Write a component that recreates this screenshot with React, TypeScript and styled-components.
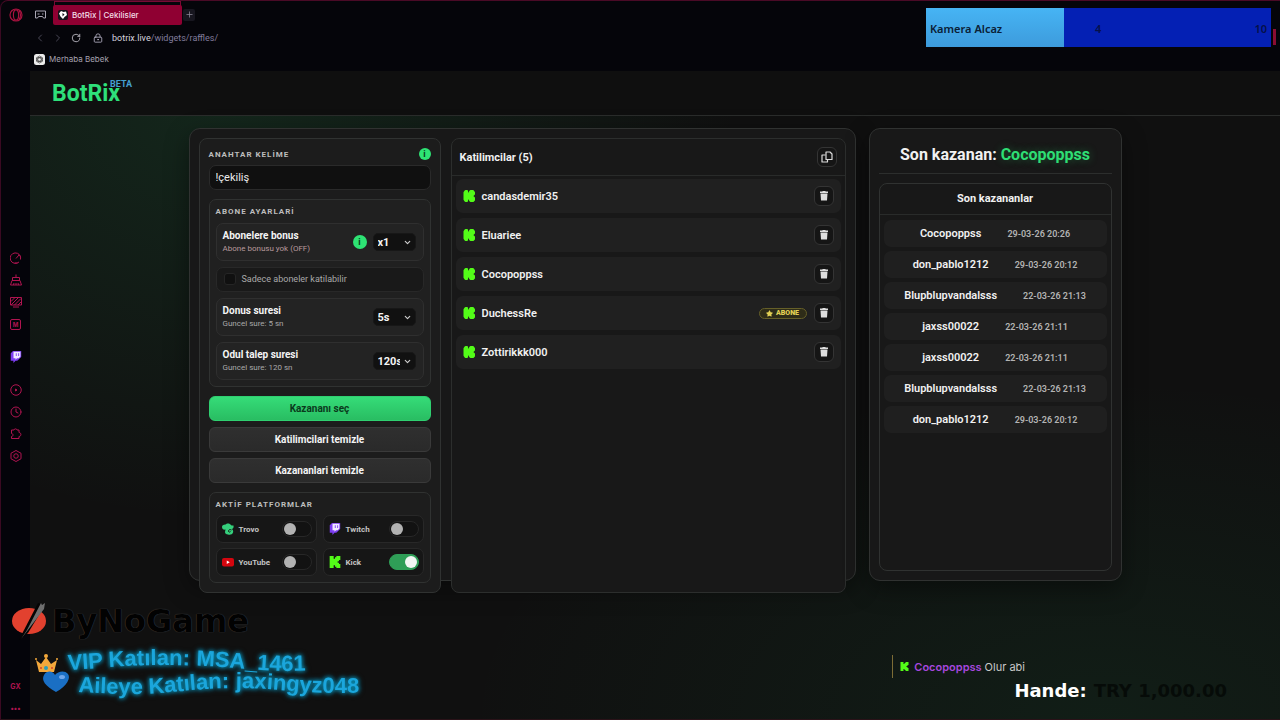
import React from "react";
import styled, { createGlobalStyle, css } from "styled-components";
import { Clock, ChevronLeft, ChevronRight, ChevronDown, RotateCw, LockKeyhole, Plus } from "lucide-react";
import { FaStar } from "react-icons/fa";

const GlobalStyle = createGlobalStyle`
  *, *::before, *::after { box-sizing: border-box; }
  body { margin: 0; background: #05050a; font-family: Roboto, "Liberation Sans", sans-serif; color: #f1f1f1; }
  button, input, select { font-family: inherit; margin: 0; }
  svg { display: block; flex: none; }
  h1, h2, h3, p, ul { margin: 0; padding: 0; list-style: none; }
`;

/* ---------- browser window ---------- */

const Window = styled.div`
  position: relative;
  display: flex;
  flex-direction: column;
  min-height: 100vh;
  overflow: hidden;
  background: #05050a;
  border-top: 1px solid #4a0a26;
  border-left: 1px solid #3a0a22;
  border-bottom: 1px solid #2a1218;
  border-top-left-radius: 8px;
`;

const TabBar = styled.div`
  display: flex;
  align-items: center;
  height: 27px;
  padding-left: 8px;
  font-family: Inter, sans-serif;
`;

const BrowserIcon = styled.button<{ $size?: number }>`
  display: flex;
  align-items: center;
  justify-content: center;
  width: ${(p) => p.$size ?? 12}px;
  height: ${(p) => p.$size ?? 12}px;
  padding: 0;
  border: 0;
  background: none;
  color: #8d8a99;
`;

const GameIcon = styled(BrowserIcon)`
  margin: 0 7px 0 11px;
`;

const Tab = styled.div`
  display: flex;
  align-items: center;
  gap: 4px;
  width: 129px;
  height: 20px;
  padding-left: 5px;
  border-radius: 2px;
  background: #8f0032;
  box-shadow: 0 -5px 0 -2px #05050a, 0 -6px 0 -1px #7a0a34;
  color: #f3dfe7;
  font-size: 8px;
  font-weight: 500;
`;

const NewTab = styled(BrowserIcon)`
  margin-left: 1px;
  border-radius: 2px;
  background: #17161f;
`;

const AddressBar = styled.div`
  display: flex;
  align-items: center;
  height: 19px;
  padding-left: 33px;
  gap: 6px;
`;

const Address = styled.span`
  display: flex;
  align-items: center;
  gap: 9px;
  margin-left: 5px;
  color: #b5b1c4;
`;

const AddressText = styled.span`
  font-size: 9px;
  color: #d5d2de;
`;

const AddressPath = styled.span`
  color: #817c9c;
`;

const Bookmarks = styled.nav`
  display: flex;
  align-items: center;
  height: 24px;
  padding-left: 33px;
  font-family: Inter, sans-serif;
`;

const Bookmark = styled.a`
  display: flex;
  align-items: center;
  gap: 4px;
  color: #a5a2af;
  font-size: 8px;
  text-decoration: none;
`;

const Body = styled.div`
  display: flex;
  flex: 1;
`;

const Sidebar = styled.nav`
  display: flex;
  flex-direction: column;
  align-items: center;
  gap: 21px;
  width: 29px;
  padding: 181px 0 4px;
  background: #04040a;
`;

const SideGroup = styled.div`
  display: flex;
  flex-direction: column;
  gap: 10px;
`;

const SideBottom = styled(SideGroup)`
  margin-top: auto;
`;

const SideButton = styled.button`
  display: flex;
  align-items: center;
  justify-content: center;
  width: 12px;
  height: 12px;
  padding: 0;
  border: 0;
  background: none;
  color: #b01450;
  font: 700 7px/12px Inter, sans-serif;
`;

const LetterBadge = styled.span`
  width: 11px;
  height: 11px;
  border: 1px solid currentColor;
  border-radius: 2px;
  font-size: 6px;
  line-height: 9px;
  text-align: center;
`;

/* ---------- site ---------- */

const Site = styled.div`
  flex: 1;
  min-width: 0;
  background:
    radial-gradient(ellipse 520px 420px at 190px 30px, rgba(46, 204, 113, 0.12), transparent 100%),
    radial-gradient(ellipse 640px 340px at 86% 100%, rgba(30, 190, 100, 0.08), transparent 100%),
    #101010;
`;

const SiteHeader = styled.header`
  display: flex;
  align-items: center;
  height: 45px;
  padding-left: 22px;
  background: #0f0f0f;
  border-bottom: 1px solid #2a2c2b;
`;

const Brand = styled.a`
  position: relative;
  color: #2ee07a;
  font-size: 23px;
  font-weight: 700;
  line-height: 27px;
  text-decoration: none;
`;

const Beta = styled.sup`
  position: absolute;
  top: -1px;
  left: 58px;
  color: #459fd0;
  font-size: 9px;
  font-weight: 700;
  line-height: 10px;
`;

const Main = styled.main`
  display: grid;
  grid-template-columns: minmax(0, 1fr) 253px;
  gap: 13px;
  max-width: 933px;
  margin: 12px auto 0;
`;

const panel = css`
  border: 1px solid #303231;
  border-radius: 11px;
  background: #181818;
  box-shadow: 0 8px 24px rgba(0, 0, 0, 0.4);
`;

const RafflePanel = styled.section`
  ${panel}
  padding: 9px;
`;

/* The two cards hang over the lower edge of their panel. */
const RaffleGrid = styled.div`
  display: grid;
  grid-template-columns: 242px minmax(0, 1fr);
  gap: 10px;
  margin-bottom: -22px;
`;

const Settings = styled.form`
  display: flex;
  flex-direction: column;
  padding: 9px;
  border: 1px solid #303231;
  border-radius: 8px;
  background: #1c1c1c;
`;

const KeywordHead = styled.div`
  display: flex;
  align-items: center;
  justify-content: space-between;
  height: 12px;
  margin-bottom: 5px;
`;

const capsLabel = css`
  color: #bdbdbd;
  font-size: 8px;
  font-weight: 700;
  line-height: 11px;
  letter-spacing: 1px;
`;

const KeywordLabel = styled.label`
  ${capsLabel}
`;

const GroupTitle = styled.h3`
  ${capsLabel}
`;

const InfoButton = styled.button<{ $size: number }>`
  width: ${(p) => p.$size}px;
  height: ${(p) => p.$size}px;
  padding: 0;
  border: 0;
  border-radius: 50%;
  background: #2ee374;
  color: #083a1c;
  font-size: 9px;
  font-weight: 700;
  line-height: ${(p) => p.$size}px;
`;

const KeywordInput = styled.input`
  width: 100%;
  height: 25px;
  padding: 0 6px;
  border: 1px solid #2a2a2a;
  border-radius: 7px;
  background: #101010;
  color: #ececec;
  font-size: 11px;
`;

const Group = styled.section`
  display: flex;
  flex-direction: column;
  gap: 6px;
  margin-top: 9px;
  padding: 6px;
  border: 1px solid #303231;
  border-radius: 7px;
  background: #202020;
`;

const PlatformGroup = styled(Group)`
  gap: 5px;
  background: #1d1d1d;
`;

const Option = styled.div`
  display: flex;
  align-items: center;
  gap: 6px;
  height: 38px;
  padding: 0 7px 0 6px;
  border: 1px solid #2f2f2f;
  border-radius: 7px;
  background: #232323;
`;

const OptionText = styled.div`
  display: flex;
  flex: 1;
  flex-direction: column;
  gap: 1px;
`;

const OptionName = styled.label`
  color: #f4f4f4;
  font-size: 10px;
  font-weight: 700;
  line-height: 12px;
`;

const OptionNote = styled.span<{ $warn?: boolean }>`
  color: ${(p) => (p.$warn ? "#b99a9d" : "#a9a9a9")};
  font-size: 8px;
  line-height: 11px;
`;

const SelectBox = styled.span`
  position: relative;
  display: block;

  svg {
    position: absolute;
    top: 5px;
    right: 4px;
    color: #d0d0d0;
    pointer-events: none;
  }
`;

const Select = styled.select`
  display: block;
  width: 43px;
  height: 18px;
  padding: 0 15px 0 4px;
  border: 1px solid #171717;
  border-radius: 5px;
  appearance: none;
  background: #111;
  color: #f4f4f4;
  font-size: 11px;
  font-weight: 700;
`;

const CheckRow = styled.label`
  display: flex;
  align-items: center;
  gap: 6px;
  height: 25px;
  padding: 0 7px 1px;
  border: 1px solid #282828;
  border-radius: 7px;
  background: #191919;
  color: #a9a9a9;
  font-size: 9px;
`;

const CheckBox = styled.input`
  appearance: none;
  width: 12px;
  height: 12px;
  border: 1px solid #252525;
  border-radius: 3px;
  background: #101010;
`;

const Actions = styled.div`
  display: flex;
  flex-direction: column;
  gap: 6px;
  margin-top: 9px;
`;

const ActionButton = styled.button<{ $primary?: boolean }>`
  height: 25px;
  padding: 0;
  border: 1px solid ${(p) => (p.$primary ? "#2fcf70" : "#3a3a3a")};
  border-radius: 6px;
  background: ${(p) => (p.$primary ? "linear-gradient(#35dc78, #29bd62)" : "linear-gradient(#2f2f2f, #2a2a2a)")};
  color: ${(p) => (p.$primary ? "#0a3a1c" : "#f4f4f4")};
  font-size: 10px;
  font-weight: 700;
`;

const Platforms = styled.div`
  display: grid;
  grid-template-columns: 1fr 1fr;
  gap: 5px 6px;
`;

const Platform = styled.label`
  display: flex;
  align-items: center;
  gap: 5px;
  height: 28px;
  padding: 0 4px 0 5px;
  border: 1px solid #282828;
  border-radius: 7px;
  background: #161616;
  color: #c4c4c4;
  font-size: 8px;
  font-weight: 700;
`;

const Toggle = styled.input`
  appearance: none;
  display: flex;
  align-items: center;
  width: 30px;
  height: 16px;
  margin-left: auto;
  padding: 0 1px;
  border: 1px solid #272727;
  border-radius: 8px;
  background: #121212;

  &::before {
    content: "";
    width: 12px;
    height: 12px;
    border-radius: 50%;
    background: #b2b2b2;
  }

  &:checked {
    justify-content: flex-end;
    border-color: #2f9e57;
    background: #2f9e57;
  }

  &:checked::before {
    background: #f2f6f3;
  }
`;

const Participants = styled.section`
  border: 1px solid #2c2e2d;
  border-radius: 8px;
  background: #181818;
`;

const ListHead = styled.div`
  display: flex;
  align-items: center;
  justify-content: space-between;
  height: 37px;
  padding: 0 8px;
  border-bottom: 1px solid #292b2a;
`;

const ListTitle = styled.h2`
  font-size: 11px;
  font-weight: 700;
`;

const IconButton = styled.button`
  display: flex;
  align-items: center;
  justify-content: center;
  width: 20px;
  height: 20px;
  padding: 0;
  border: 1px solid #343434;
  border-radius: 6px;
  background: #151515;
  color: #dcdcdc;
`;

const ParticipantList = styled.ul`
  display: flex;
  flex-direction: column;
  gap: 5px;
  padding: 3px 4px;
`;

const Participant = styled.li`
  display: flex;
  align-items: center;
  gap: 7px;
  height: 34px;
  padding: 0 7px;
  border-radius: 7px;
  background: #202020;
`;

const ParticipantName = styled.span`
  flex: 1;
  font-size: 11px;
  font-weight: 600;
`;

const SubBadge = styled.span`
  display: flex;
  align-items: center;
  justify-content: center;
  gap: 3px;
  width: 48px;
  height: 11px;
  border: 1px solid #655f28;
  border-radius: 6px;
  background: #2e2c18;
  color: #e3d155;
  font-size: 7px;
  font-weight: 900;
`;

const WinnerPanel = styled.aside`
  ${panel}
  display: flex;
  flex-direction: column;
  gap: 9px;
  padding: 9px;
`;

const WinnerTitle = styled.h1`
  height: 36px;
  border-bottom: 1px solid #2c2e2d;
  font-size: 16px;
  font-weight: 700;
  line-height: 33px;
  text-align: center;
`;

const WinnerName = styled.span`
  color: #2ede74;
  text-shadow: 0 0 8px rgba(46, 222, 116, 0.35);
`;

const WinnerBox = styled.section`
  flex: 1;
  border: 1px solid #303231;
  border-radius: 8px;
  background: #181818;
`;

const WinnerHead = styled.h2`
  height: 31px;
  border-bottom: 1px solid #292b2a;
  font-size: 11px;
  font-weight: 700;
  line-height: 30px;
  text-align: center;
`;

const WinnerList = styled.ul`
  display: flex;
  flex-direction: column;
  gap: 4px;
  padding: 5px 4px;
`;

const WinnerRow = styled.li`
  display: flex;
  align-items: center;
  justify-content: center;
  gap: 26px;
  height: 27px;
  border-radius: 7px;
  background: #1f1f1f;
  font-size: 11px;
  font-weight: 600;
`;

const WinnerDate = styled.time`
  color: #b3b3b3;
  font-size: 9px;
`;

/* ---------- stream overlays ---------- */

const CameraGoal = styled.div`
  position: absolute;
  top: 7px;
  right: 9px;
  display: flex;
  width: 345px;
  height: 39px;
  font-family: "Noto Sans", sans-serif;
  font-size: 11px;
  font-weight: 600;
  line-height: 41px;
`;

const GoalDone = styled.div`
  width: 138px;
  padding-left: 4px;
  background: linear-gradient(#46b4f4, #3d9bdc);
  color: #0a2036;
`;

const GoalRest = styled.div`
  display: flex;
  flex: 1;
  justify-content: space-between;
  padding: 0 4px 0 31px;
  background: #0420b4;
  color: #061048;
`;

const EdgeMark = styled.div`
  position: absolute;
  top: 28px;
  right: 4px;
  width: 3px;
  height: 16px;
  background: #8a0d33;
`;

const Sponsor = styled.div`
  position: absolute;
  left: 10px;
  bottom: 78px;
  display: flex;
  align-items: center;
  gap: 3px;
`;

const SponsorName = styled.span`
  color: #020202;
  font-family: "DejaVu Sans", sans-serif;
  font-size: 32px;
  font-weight: 700;
  line-height: 36px;
  text-shadow: 0 0 1px #5a5a5a;
`;

const Alerts = styled.div`
  position: absolute;
  left: 28px;
  bottom: 10px;

  text {
    fill: #1ba6dc;
    font: 700 22px "Liberation Sans", sans-serif;
  }

  svg {
    overflow: visible;
  }
`;

const Glow = styled.g`
  filter: drop-shadow(0 0 2px #0b93b8) drop-shadow(0 0 2px #07607c);
`;

const ChatLine = styled.p`
  position: absolute;
  right: 255px;
  bottom: 41px;
  display: flex;
  align-items: center;
  gap: 3px;
  height: 23px;
  padding-left: 7px;
  border-left: 1px solid #7d6c35;
  color: #c9c9c9;
  font-family: Inter, sans-serif;
  font-size: 11px;

  svg {
    margin-right: 2px;
  }
`;

const ChatName = styled.strong`
  color: #a547dd;
  font-weight: 600;
`;

const Donation = styled.p`
  position: absolute;
  right: 53px;
  bottom: 17px;
  display: flex;
  gap: 7px;
  color: #060b08;
  font: 700 18px/22px "DejaVu Sans", sans-serif;
`;

const Donor = styled.span`
  color: #fff;
`;

/* ---------- drawings ---------- */

const KickIcon = ({ size = 12 }: { size?: number }) => (
  <svg width={size} height={size} viewBox="0 0 24 24" fill="#53fc18">
    <path d="M1.3 0h8v5.3H12V2.7h2.7V0h8v8H20v2.7h-2.7v2.6H20V16h2.7v8h-8v-2.7H12v-2.6H9.3V24h-8Z" />
  </svg>
);

const KickBlobIcon = () => (
  <svg width="12" height="12" viewBox="0 0 24 24" fill="#53fc18" stroke="#53fc18" strokeWidth="4" strokeLinejoin="round">
    <path d="M3 5l2-3h3v6h3l2-3 2-3h5l2 3v3l-4 4 4 4v4l-2 2h-5l-2-3-2-3H8v6H5l-2-3z" />
  </svg>
);

const TwitchIcon = ({ size = 12 }: { size?: number }) => (
  <svg width={size} height={size} viewBox="0 0 24 24">
    <path fill="#7c3df0" d="M6 0 1.5 4.3v15.4h5.3V24l4.4-4.3h3.4L22.4 12V0z" />
    <path fill="#f1eaff" d="m20.8 11.1-3.4 3.5H14l-3 3v-3H7V1.7h13.8z" />
    <path fill="#7c3df0" d="M16.4 4.6h1.8v5.2h-1.8zM11.6 4.6h1.8v5.2h-1.8z" />
  </svg>
);

const TrovoIcon = () => (
  <svg width="12" height="12" viewBox="0 0 24 24">
    <path fill="#35cf7c" d="M7 3c2-3 8-3 10 0 1 2 3 2 6 2 1 4-1 7-4 7 3 1 4 4 3 7-1 4-6 5-10 4-4 0-6-2-6-5l1-5c-4 1-7-1-7-5 0-3 2-5 7-5z" />
    <path fill="none" stroke="#161616" strokeWidth="2" d="M19 14c-3-2-7 0-6 3 1 2 4 1 4 0" />
  </svg>
);

const YouTubeIcon = () => (
  <svg width="12" height="12" viewBox="0 0 24 24">
    <rect y="4" width="24" height="17" rx="4" fill="#d5060f" />
    <path fill="#fff" d="m9.500 9 6 3.500-6 3.500z" />
  </svg>
);

const OperaIcon = () => (
  <svg width="14" height="14" viewBox="0 0 14 14" fill="none" stroke="#a8123f" strokeWidth="1.2">
    <circle cx="7" cy="7" r="6" />
    <ellipse cx="7" cy="7" rx="2.6" ry="5.2" />
    <path d="M10 2.300c2 2.500 2 6.900 0 9.400" />
  </svg>
);

const GamepadIcon = () => (
  <svg width="11" height="9" viewBox="0 0 22 18" fill="none" stroke="#aaa7b5" strokeWidth="2" strokeLinejoin="round">
    <path d="M1 2h20v14h-4l-2-3H7l-2 3H1z" />
    <path d="M5 8h4M14 8h3" />
  </svg>
);

const TabIcon = () => (
  <svg width="10" height="10" viewBox="0 0 20 20">
    <rect width="20" height="20" rx="4" fill="#14141a" />
    <path fill="#fff" d="m6 2 5 2 5-1 2 7-5 4-3 4-5-5-3-6z" />
    <path fill="#14141a" d="m9 6 4 3-4 4z" />
  </svg>
);

const BookmarkIcon = () => (
  <svg width="11" height="11" viewBox="0 0 22 22">
    <rect width="22" height="22" rx="5" fill="#ececec" />
    <g fill="none" stroke="#3c3c3c" strokeWidth="1.4">
      <ellipse cx="11" cy="11" rx="3.500" ry="7" />
      <ellipse cx="11" cy="11" rx="3.500" ry="7" transform="rotate(60 11 11)" />
      <ellipse cx="11" cy="11" rx="3.500" ry="7" transform="rotate(120 11 11)" />
    </g>
  </svg>
);

const SideSvg = ({ children }: { children: React.ReactNode }) => (
  <svg width="12" height="12" viewBox="0 0 24 24" fill="none" stroke="currentColor" strokeWidth="2" strokeLinejoin="round">
    {children}
  </svg>
);

const GaugeIcon = () => (
  <SideSvg>
    <path d="M18 20a10.500 10.500 0 1 1 3-5M17 4.500A10.500 10.500 0 0 1 21 9M12 13l6-7M9 22h6" />
  </SideSvg>
);

const BroomIcon = () => (
  <SideSvg>
    <path d="M12 1v6M5 13V7h14v6M4 13h16l3 9H1zM7 22l1-4M12 22v-4M17 22l-1-4" />
  </SideSvg>
);

const HatchIcon = () => (
  <SideSvg>
    <path d="M1 3h22v15H1zM6 22h12M2 11l8-8M2 18 17 3M9 18 22 5M16 18l6-6" />
  </SideSvg>
);

const PlayIcon = () => (
  <SideSvg>
    <circle cx="12" cy="12" r="10.500" />
    <path fill="currentColor" d="m11 10 3 2-3 2z" />
  </SideSvg>
);

const ExtensionIcon = () => (
  <SideSvg>
    <path d="M3 4h5c0-3 6-3 6 0h4v5c5 0 5 8 0 8v4H3v-4c4 0 4-6 0-6z" />
  </SideSvg>
);

const HexIcon = () => (
  <SideSvg>
    <path d="m12 1 10 5.500v11L12 23 2 17.500v-11z" />
    <circle cx="12" cy="12" r="4.500" />
  </SideSvg>
);

const CopyIcon = () => (
  <svg width="12" height="12" viewBox="0 0 24 24" fill="none" stroke="currentColor" strokeWidth="2.4" strokeLinejoin="round">
    <path d="M10 2h8l4 4v11H10z" />
    <path d="M9 8H2v14h11v-4" />
  </svg>
);

const TrashIcon = () => (
  <svg width="10" height="10" viewBox="0 0 20 20" fill="#dedede">
    <path d="M7 0h6v1h5v3H2V1h5zM3 5h14l-1 14H4z" />
  </svg>
);

const SponsorMark = () => (
  <svg width="38" height="40" viewBox="0 0 38 40">
    <ellipse cx="18" cy="20" rx="17" ry="13" fill="#e2412f" />
    <path fill="#050505" d="M27 2 12 31l-4 8 9-7L34 4z" />
    <path fill="#6f6f6f" d="m30 2-14 27-6 9L33 8l1-6-3 2z" />
  </svg>
);

const WaveAlerts = () => (
  <svg width="340" height="62" viewBox="0 0 340 62">
    <defs>
      <path id="wave-vip" d="M39 23C75 21 95 18 135 18S205 21 232 23 270 23 320 23" />
      <path id="wave-family" d="M49 45C70 46 85 47 104 47 140 47 165 41 205 41S270 46 310 46 340 46 370 46" />
    </defs>
    <path fill="#f3a83b" d="m7 13 5 4 5-7 5 7 6-4-3 12H10z" />
    <circle cx="7" cy="12" r="1" fill="#f3a83b" />
    <circle cx="17" cy="9" r="2" fill="#f3a83b" />
    <circle cx="28" cy="12" r="1" fill="#f3a83b" />
    <circle cx="12" cy="21" r="1" fill="#d6452e" />
    <circle cx="17" cy="21" r="2" fill="#2a9dba" />
    <circle cx="23" cy="21" r="1" fill="#d6452e" />
    <path fill="#1a6fc4" d="M27 45C16 39 12 33 15 28s9-4 11 0c3-4 10-5 13-1s-1 12-12 18z" />
    <ellipse cx="33" cy="30" rx="3" ry="2" fill="#6fa6ea" />
    <Glow>
      <text>
        <textPath href="#wave-vip">VIP Katılan: MSA_1461</textPath>
      </text>
      <text>
        <textPath href="#wave-family">Aileye Katılan: jaxingyz048</textPath>
      </text>
    </Glow>
  </svg>
);

/* ---------- data ---------- */

const participants = [
  { name: "candasdemir35" },
  { name: "Eluariee" },
  { name: "Cocopoppss" },
  { name: "DuchessRe", subscriber: true },
  { name: "Zottirikkk000" },
];

const winners = [
  ["Cocopoppss", "29-03-26 20:26"],
  ["don_pablo1212", "29-03-26 20:12"],
  ["Blupblupvandalsss", "22-03-26 21:13"],
  ["jaxss00022", "22-03-26 21:11"],
  ["jaxss00022", "22-03-26 21:11"],
  ["Blupblupvandalsss", "22-03-26 21:13"],
  ["don_pablo1212", "29-03-26 20:12"],
];

const platforms = [
  { name: "Trovo", icon: <TrovoIcon />, on: false },
  { name: "Twitch", icon: <TwitchIcon />, on: false },
  { name: "YouTube", icon: <YouTubeIcon />, on: false },
  { name: "Kick", icon: <KickIcon />, on: true },
];

const Dropdown = ({ id, value }: { id: string; value: string }) => (
  <SelectBox>
    <Select id={id} defaultValue={value}>
      <option>{value}</option>
    </Select>
    <ChevronDown size={9} strokeWidth={3} />
  </SelectBox>
);

export default function App() {
  return (
    <Window>
      <GlobalStyle />
      <TabBar>
        <BrowserIcon $size={14} aria-label="Opera"><OperaIcon /></BrowserIcon>
        <GameIcon aria-label="GX"><GamepadIcon /></GameIcon>
        <Tab><TabIcon />BotRix | Cekilisler</Tab>
        <NewTab aria-label="Yeni sekme"><Plus size={9} /></NewTab>
      </TabBar>
      <AddressBar>
        <BrowserIcon aria-label="Geri"><ChevronLeft size={12} color="#4a4856" /></BrowserIcon>
        <BrowserIcon aria-label="İleri"><ChevronRight size={12} color="#4a4856" /></BrowserIcon>
        <BrowserIcon aria-label="Yenile"><RotateCw size={10} color="#c5c3cc" /></BrowserIcon>
        <Address>
          <LockKeyhole size={10} />
          <AddressText>botrix.live<AddressPath>/widgets/raffles/</AddressPath></AddressText>
        </Address>
      </AddressBar>
      <Bookmarks>
        <Bookmark href="#"><BookmarkIcon />Merhaba Bebek</Bookmark>
      </Bookmarks>

      <Body>
        <Sidebar>
          <SideGroup>
            <SideButton aria-label="GX Control"><GaugeIcon /></SideButton>
            <SideButton aria-label="GX Cleaner"><BroomIcon /></SideButton>
            <SideButton aria-label="Duvar"><HatchIcon /></SideButton>
            <SideButton aria-label="Mods"><LetterBadge>M</LetterBadge></SideButton>
          </SideGroup>
          <SideButton aria-label="Twitch"><TwitchIcon /></SideButton>
          <SideGroup>
            <SideButton aria-label="Oynatıcı"><PlayIcon /></SideButton>
            <SideButton aria-label="Geçmiş"><Clock size={12} /></SideButton>
            <SideButton aria-label="Uzantılar"><ExtensionIcon /></SideButton>
            <SideButton aria-label="Ayarlar"><HexIcon /></SideButton>
          </SideGroup>
          <SideBottom>
            <SideButton>GX</SideButton>
            <SideButton>•••</SideButton>
          </SideBottom>
        </Sidebar>

        <Site>
          <SiteHeader>
            <Brand href="#">BotRix<Beta>BETA</Beta></Brand>
          </SiteHeader>
          <Main>
            <RafflePanel>
              <RaffleGrid>
                <Settings>
                  <KeywordHead>
                    <KeywordLabel htmlFor="keyword">ANAHTAR KELİME</KeywordLabel>
                    <InfoButton type="button" $size={12}>i</InfoButton>
                  </KeywordHead>
                  <KeywordInput id="keyword" defaultValue="!çekiliş" />

                  <Group>
                    <GroupTitle>ABONE AYARLARİ</GroupTitle>
                    <Option>
                      <OptionText>
                        <OptionName htmlFor="bonus">Abonelere bonus</OptionName>
                        <OptionNote $warn>Abone bonusu yok (OFF)</OptionNote>
                      </OptionText>
                      <InfoButton type="button" $size={14}>i</InfoButton>
                      <Dropdown id="bonus" value="x1" />
                    </Option>
                    <CheckRow>
                      <CheckBox type="checkbox" />
                      Sadece aboneler katilabilir
                    </CheckRow>
                    <Option>
                      <OptionText>
                        <OptionName htmlFor="spin">Donus suresi</OptionName>
                        <OptionNote>Guncel sure: 5 sn</OptionNote>
                      </OptionText>
                      <Dropdown id="spin" value="5s" />
                    </Option>
                    <Option>
                      <OptionText>
                        <OptionName htmlFor="claim">Odul talep suresi</OptionName>
                        <OptionNote>Guncel sure: 120 sn</OptionNote>
                      </OptionText>
                      <Dropdown id="claim" value="120s" />
                    </Option>
                  </Group>

                  <Actions>
                    <ActionButton type="button" $primary>Kazananı seç</ActionButton>
                    <ActionButton type="button">Katilimcilari temizle</ActionButton>
                    <ActionButton type="button">Kazananlari temizle</ActionButton>
                  </Actions>

                  <PlatformGroup>
                    <GroupTitle>AKTİF PLATFORMLAR</GroupTitle>
                    <Platforms>
                      {platforms.map((p) => (
                        <Platform key={p.name}>
                          {p.icon}
                          {p.name}
                          <Toggle type="checkbox" defaultChecked={p.on} />
                        </Platform>
                      ))}
                    </Platforms>
                  </PlatformGroup>
                </Settings>

                <Participants>
                  <ListHead>
                    <ListTitle>Katilimcilar (5)</ListTitle>
                    <IconButton aria-label="Kopyala"><CopyIcon /></IconButton>
                  </ListHead>
                  <ParticipantList>
                    {participants.map((p) => (
                      <Participant key={p.name}>
                        <KickBlobIcon />
                        <ParticipantName>{p.name}</ParticipantName>
                        {p.subscriber && <SubBadge><FaStar size={7} />ABONE</SubBadge>}
                        <IconButton aria-label="Sil"><TrashIcon /></IconButton>
                      </Participant>
                    ))}
                  </ParticipantList>
                </Participants>
              </RaffleGrid>
            </RafflePanel>

            <WinnerPanel>
              <WinnerTitle>Son kazanan: <WinnerName>Cocopoppss</WinnerName></WinnerTitle>
              <WinnerBox>
                <WinnerHead>Son kazananlar</WinnerHead>
                <WinnerList>
                  {winners.map(([name, date], i) => (
                    <WinnerRow key={i}>
                      {name}
                      <WinnerDate>{date}</WinnerDate>
                    </WinnerRow>
                  ))}
                </WinnerList>
              </WinnerBox>
            </WinnerPanel>
          </Main>
        </Site>
      </Body>

      <CameraGoal>
        <GoalDone>Kamera Alcaz</GoalDone>
        <GoalRest><span>4</span><span>10</span></GoalRest>
      </CameraGoal>
      <EdgeMark />
      <Sponsor>
        <SponsorMark />
        <SponsorName>ByNoGame</SponsorName>
      </Sponsor>
      <Alerts><WaveAlerts /></Alerts>
      <ChatLine>
        <KickIcon size={9} />
        <ChatName>Cocopoppss</ChatName>
        <span>Olur abi</span>
      </ChatLine>
      <Donation><Donor>Hande:</Donor><span>TRY 1,000.00</span></Donation>
    </Window>
  );
}
